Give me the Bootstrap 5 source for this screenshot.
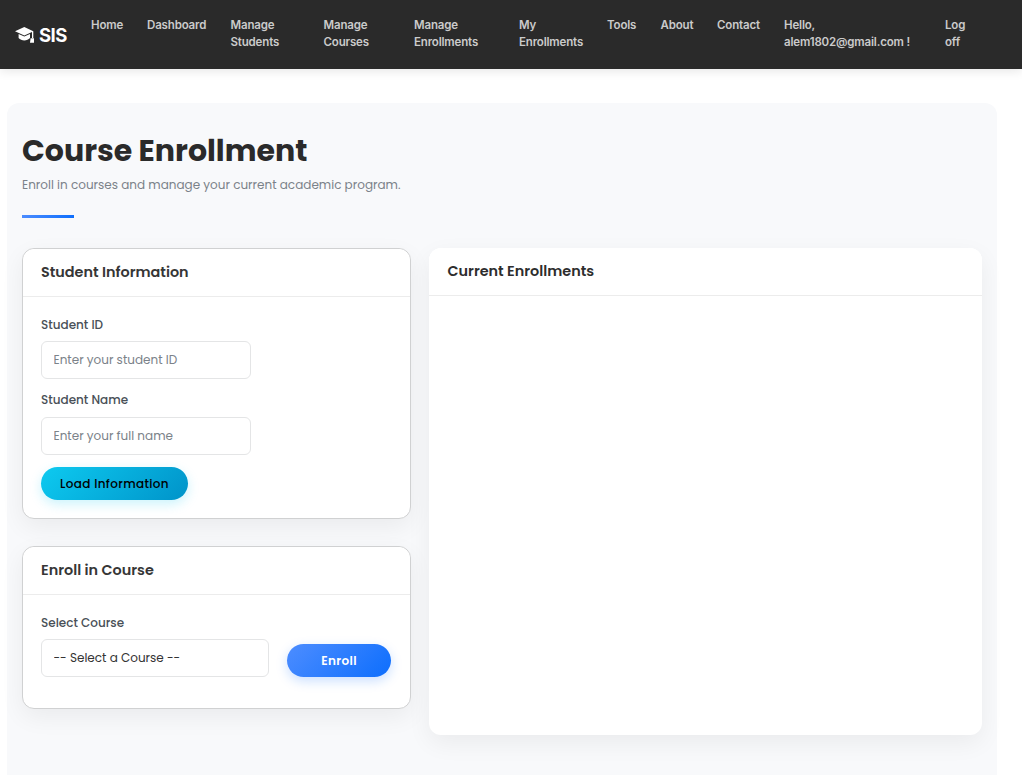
<!DOCTYPE html>
<html lang="en">
<head>
<meta charset="utf-8">
<meta name="viewport" content="width=device-width, initial-scale=1">
<title>Course Enrollment - SIS</title>
<link rel="stylesheet" href="https://cdn.jsdelivr.net/npm/bootstrap@5.3.0/dist/css/bootstrap.min.css">
<style>
  html, body { overflow: hidden; }
  body { font-family: Poppins, Inter, sans-serif; font-size: 12px; background: #fff; height: 775px; }
  .topbar { height: 69px; background: #2a2a2a; box-shadow: 0 2px 10px rgba(0,0,0,.1); font-family: Inter, sans-serif; padding-left: 15px; }
  .topbar .navbar-brand { font-size: 18.5px; font-weight: 700; letter-spacing: -.55px; width: 64px; gap: 5px; line-height: 24px; }
  .topbar .nav-link { font-size: 11.5px; font-weight: 600; line-height: 17px; color: #cbcbcb; padding: 0; letter-spacing: -.16px; }
  .topbar .navbar-nav { padding-top: 17px; }
  .w-home { width: 56px; } .w-dash { width: 83.5px; } .w-stud { width: 93px; } .w-cour { width: 90.5px; }
  .w-menr { width: 105px; } .w-my { width: 88px; } .w-tool { width: 53.5px; } .w-abou { width: 56.5px; }
  .w-cont { width: 67px; } .w-user { width: 161px; } .w-log { width: 30px; }
  .panel { width: 990px; min-height: 700px; margin: 34px 0 0 7px; background: #f8f9fb; border-radius: 12px; padding: 28px 15px 0; }
  .page-title { font-size: 30px; font-weight: 700; line-height: 40px; color: #2a2a2a; margin: 0; }
  .page-lead { line-height: 20px; margin: 4px 0 0; color: #7b8289; }
  .rule { width: 52px; height: 3px; margin-top: 20px; background: linear-gradient(135deg, #4d8dff, #0d6efd); }
  .columns { gap: 18px; margin-top: 30px; }
  .col-left { width: 389px; gap: 27px; }
  .box { border-radius: 12px; box-shadow: 0 8px 24px rgba(0,0,0,.06); border: 1px solid #d0d1d2; background: #fff; }
  .box .card-header { height: 48px; background: #fff; border-bottom: 1px solid #ececec; border-radius: 12px 12px 0 0; padding: 0 18px; font-size: 14.4px; font-weight: 600; color: #363636; line-height: 46px; }
  .box .card-body { padding: 18px; }
  .box-plain { width: 553px; height: 487px; border: 0; }
  .box-plain .card-header { padding-left: 18.5px; color: #2d2d2d; }
  .box-info { height: 271px; }
  .box-enroll { height: 163px; }
  .form-label { display: block; font-size: 12px; font-weight: 500; line-height: 20px; margin: 0 0 6px; color: #495057; }
  .form-control, .form-select { font-size: 12px; height: 38px; border: 1px solid #e4e5e6; border-radius: 6px; padding: 0 12px 0 11.5px; background-image: none; color: #333; }
  .form-control { width: 210px; margin-bottom: 11px; }
  #sname { margin-top: 7px; }
  label[for="sname"] { margin-bottom: 0; }
  .form-control::placeholder { color: #7b8289; }
  .form-select { width: 228px; }
  .pill { height: 33px; padding: 0; border: 0; border-radius: 17px; font-size: 12px; line-height: 32px; letter-spacing: .36px; }
  .pill-load { width: 147px; margin-top: 1px; font-weight: 500; color: #000; background: linear-gradient(135deg, #0dcaf0, #0093c9); box-shadow: 0 4px 12px rgba(13,202,240,.22); }
  .pill-enroll { width: 104px; margin: 5px 1px 0 0; font-weight: 600; color: #fff; background: linear-gradient(135deg, #4d8dff, #0d6efd); box-shadow: 0 4px 12px rgba(13,110,253,.22); }
</style>
</head>
<body>
<nav class="topbar d-flex align-items-stretch">
  <a class="navbar-brand d-flex align-items-center text-white m-0 p-0 me-2" href="#">
    <svg width="19" height="18" viewBox="0 0 19 18" fill="#fff" aria-hidden="true">
      <path d="M9.3 1 0 5.2 9.3 9.4 17 5.9V12h1.3V5.2Z"/>
      <path d="M3.6 7.9v4c2.8 3.3 8.6 3.3 11.4 0v-4l-5.7 2.6Z"/>
      <path d="M15.6 12.2h3.4v4.5h-4Z"/>
    </svg>
    <span>SIS</span>
  </a>
  <div class="navbar-nav flex-row ms-1">
    <a class="nav-link w-home" href="#">Home</a>
    <a class="nav-link w-dash" href="#">Dashboard</a>
    <a class="nav-link w-stud" href="#">Manage<br>Students</a>
    <a class="nav-link w-cour" href="#">Manage<br>Courses</a>
    <a class="nav-link w-menr" href="#">Manage<br>Enrollments</a>
    <a class="nav-link w-my" href="#">My<br>Enrollments</a>
    <a class="nav-link w-tool" href="#">Tools</a>
    <a class="nav-link w-abou" href="#">About</a>
    <a class="nav-link w-cont" href="#">Contact</a>
    <a class="nav-link w-user" href="#">Hello,<br>alem1802@gmail.com !</a>
    <a class="nav-link w-log" href="#">Log<br>off</a>
  </div>
</nav>
<main class="panel">
  <h1 class="page-title">Course Enrollment</h1>
  <p class="page-lead">Enroll in courses and manage your current academic program.</p>
  <div class="rule"></div>
  <div class="columns d-flex align-items-start">
    <div class="col-left d-flex flex-column">
      <section class="card box box-info">
        <div class="card-header">Student Information</div>
        <div class="card-body">
          <label class="form-label" for="sid">Student ID</label>
          <input class="form-control" id="sid" placeholder="Enter your student ID">
          <label class="form-label" for="sname">Student Name</label>
          <input class="form-control" id="sname" placeholder="Enter your full name">
          <button class="btn pill pill-load" type="button">Load Information</button>
        </div>
      </section>
      <section class="card box box-enroll">
        <div class="card-header">Enroll in Course</div>
        <div class="card-body">
          <label class="form-label" for="course">Select Course</label>
          <div class="d-flex justify-content-between align-items-start">
            <select class="form-select" id="course"><option>-- Select a Course --</option></select>
            <button class="btn pill pill-enroll" type="button">Enroll</button>
          </div>
        </div>
      </section>
    </div>
    <section class="card box box-plain">
      <div class="card-header">Current Enrollments</div>
    </section>
  </div>
</main>
<script src="https://cdn.jsdelivr.net/npm/bootstrap@5.3.0/dist/js/bootstrap.bundle.min.js"></script>
</body>
</html>
